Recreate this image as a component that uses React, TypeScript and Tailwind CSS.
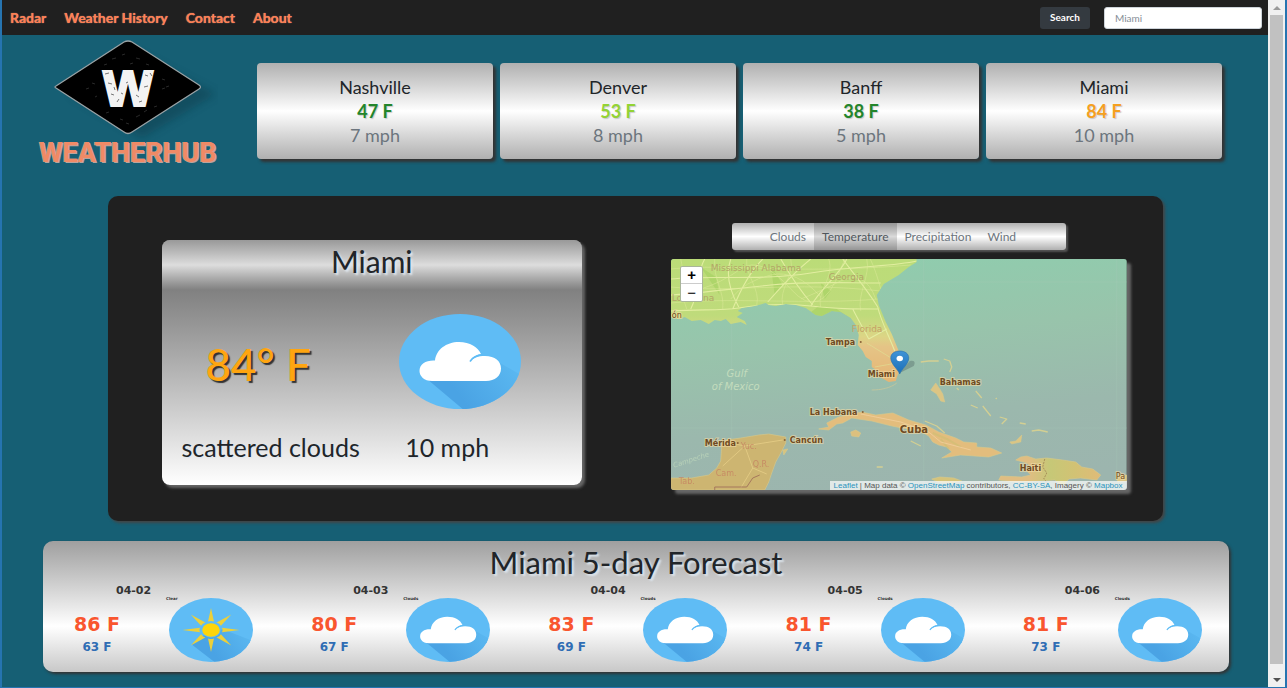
import React from "react";

type City = { name: string; temp: string; wind: string; color: string };

const cities: City[] = [
  { name: "Nashville", temp: "47 F", wind: "7 mph", color: "text-[#23852b]" },
  { name: "Denver", temp: "53 F", wind: "8 mph", color: "text-[#93d334]" },
  { name: "Banff", temp: "38 F", wind: "5 mph", color: "text-[#23852b]" },
  { name: "Miami", temp: "84 F", wind: "10 mph", color: "text-[#f5a01f]" },
];

type Day = { date: string; high: string; low: string; sky: "Clear" | "Clouds" };

const days: Day[] = [
  { date: "04-02", high: "86 F", low: "63 F", sky: "Clear" },
  { date: "04-03", high: "80 F", low: "67 F", sky: "Clouds" },
  { date: "04-04", high: "83 F", low: "69 F", sky: "Clouds" },
  { date: "04-05", high: "81 F", low: "74 F", sky: "Clouds" },
  { date: "04-06", high: "81 F", low: "73 F", sky: "Clouds" },
];

const links = ["Radar", "Weather History", "Contact", "About"];
const layers = ["Clouds", "Temperature", "Precipitation", "Wind"];

function SkyIcon({ sky, id, className }: { sky: string; id: string; className: string }) {
  return (
    <svg viewBox="0 0 122 95" preserveAspectRatio="none" className={className} aria-hidden="true">
      <defs>
        <clipPath id={`${id}-clip`}>
          <ellipse cx="61" cy="47.5" rx="61" ry="47.5" />
        </clipPath>
        <linearGradient id={`${id}-shade`} x1="0" x2="1" y1="0.4" y2="0">
          <stop offset="0.2" stopColor="#4aa3e4" />
          <stop offset="1" stopColor="#5cbaf2" />
        </linearGradient>
      </defs>
      <g clipPath={`url(#${id}-clip)`}>
        <rect width="122" height="95" fill="#5fbcf5" />
        {sky === "Clear" ? (
          <>
            <path d="M33 69 L61 47 L80 47 L122 64 V95 H66 Z" fill={`url(#${id}-shade)`} />
            <g transform="translate(61 47.5) scale(1.28 1)">
              {[0, 45, 90, 135, 180, 225, 270, 315].map((a) => (
                <path key={a} d="M-3.4 -12.5 Q0 -14 3.4 -12.5 L0 -32.5 Z" fill="#ecd03a" transform={`rotate(${a})`} />
              ))}
              <circle r="11" fill="#5fbcf5" />
              <circle r="10" fill="#fdd50a" />
            </g>
          </>
        ) : (
          <>
            <path d="M28 65 L66 97 L122 95 V61 L101 49 Z" fill={`url(#${id}-shade)`} />
            <path
              d="M33 67 C25 67 20.500 62 20.500 57 C20.500 50 27 46 36 46.500 C37 36 47 28 60 28 C71 28 79 33 82 40 C76 41 72.500 44 70.500 47.500 C74 44 79 42 86 42 C96 42 102 47 102 54.500 C102 62 96 67 87 67 Z"
              fill="#fff"
            />
            <path d="M71 47.500 C74 43 78 41 84 40.800" fill="none" stroke="#5fbcf5" strokeWidth="1.600" />
          </>
        )}
      </g>
    </svg>
  );
}

function Logo() {
  return (
    <a href="#home" className="flex w-[180px] shrink-0 flex-col items-center">
      <svg viewBox="0 0 180 104" className="h-[104px] w-[180px]">
        <defs>
          <filter id="logo-soft" x="-20%" y="-20%" width="150%" height="150%">
            <feGaussianBlur stdDeviation="4" />
          </filter>
        </defs>
        <path d="M32 57 L98 15 L178 57 L104 101 Z" fill="#0b3442" opacity=".4" filter="url(#logo-soft)" />
        <path
          d="M18 51 Q16 50 18 49 L86 5 Q90 3 94 5 L161 48 Q164 50 161 52 L94 95 Q90 98 86 95 Z"
          fill="#000"
          stroke="#9aa3a6"
          strokeWidth="1.300"
        />
        <path
          d="M66 28l3-1M74 22l4-1M84 18l3-1M98 21l4 1M108 27l3 1M54 46l3 1M57 60l2-1M68 76l3-1M82 82l3 1M98 80l4-2M116 70l3-1M124 52l3-1M124 42l3 1M92 27l3-1M88 86l3 1M106 75l3-2M48 52l3-1M128 50l3-1"
          stroke="#333"
          strokeWidth=".800"
        />
        <text
          x="90"
          y="69"
          textAnchor="middle"
          fill="#f3f3f3"
          stroke="#f3f3f3"
          strokeWidth="2"
          className="font-['DejaVu_Sans'] text-[48px] font-bold"
        >
          W
        </text>
        <path
          d="M67 37l4-1M70 46l4 1M73 57l3 1M79 65l2-3M98 58l3 2M107 38l3 1M106 50l4-1M101 65l3-1M88 46l2-1M76 50l1 3M112 36l2 3M83 56l2 1"
          stroke="#666"
          strokeWidth=".900"
        />
      </svg>
      <span className="font-[Roboto] text-[27px] leading-6 font-bold text-[#f08a66] [text-shadow:1px_1px_0_#b9a49e,-1px_0_0_#c8a49c]">
        WEATHERHUB
      </span>
    </a>
  );
}

const halo = { paintOrder: "stroke", stroke: "#f3dda6", strokeWidth: 2, strokeOpacity: 0.6 } as const;

function WeatherMap() {
  return (
    <svg viewBox="0 0 456 231" preserveAspectRatio="xMidYMid slice" className="h-[231px] w-full font-['DejaVu_Sans']">
      <defs>
        <linearGradient id="sea" x1="0.3" x2="0.5" y1="0" y2="1">
          <stop offset="0" stopColor="#8fcdae" />
          <stop offset="0.350" stopColor="#98c4ab" />
          <stop offset="0.700" stopColor="#9bb8ad" />
          <stop offset="1" stopColor="#9cb5ae" />
        </linearGradient>
        <linearGradient id="usa" gradientUnits="userSpaceOnUse" x1="0" x2="0" y1="0" y2="125">
          <stop offset="0" stopColor="#bbdc78" />
          <stop offset="0.450" stopColor="#bfdb7b" />
          <stop offset="0.620" stopColor="#dcd585" />
          <stop offset="0.700" stopColor="#e5c486" />
          <stop offset="1" stopColor="#e5b473" />
        </linearGradient>
        <linearGradient id="haiti" x1="0" x2="1" y1="0" y2="0">
          <stop offset="0.300" stopColor="#e0bd82" />
          <stop offset="0.500" stopColor="#c6c877" />
          <stop offset="0.750" stopColor="#d2c274" />
          <stop offset="1" stopColor="#e0bb78" />
        </linearGradient>
        <clipPath id="usa-clip">
          <path d="M0 58 L8 60 L14 58 L21 62 L30 61 L38 65 L44 61 L50 62 L55 60 L60 65 L70 63 L76 66 L74 62 L66 58 L72 54 L67 52 L71 49 L84 47 L95 44 L98 46 L105 47 L115 45 L125 46 L135 49 L145 56 L151 57 L161 52 L170 53 L180 59 L185 66 L188 76 L187 86 L192 92 L195 98 L201 102 L201 108 L207 112 L211 119 L218 123 L225 122 L228 113 L228 92 L221 75 L215 63 L208 46 L206 36 L213 25 L228 16 L238 8 L246 3 L246 0 L0 0 Z" />
        </clipPath>
        <linearGradient id="pin" x1="0" x2="0" y1="0" y2="1">
          <stop offset="0" stopColor="#3f93d6" />
          <stop offset="1" stopColor="#1b6fb8" />
        </linearGradient>
      </defs>
      <rect width="456" height="231" fill="url(#sea)" />
      <path d="M61 60V231M253 0V231M446 0V231M0 23H456M0 169H456" stroke="#a9cdb8" strokeWidth=".600" opacity=".5" />
      <g clipPath="url(#usa-clip)">
        <rect width="260" height="130" fill="url(#usa)" />
        <path d="M138 55l10-8 18 3 14 10-20 6zM100 6l12 20-8 10M30 8l15 10 4 18M150 24l10 8-6 8" fill="#a3d160" opacity=".6" />
        <path
          d="M0 52C30 50 50 52 68 49S110 44 140 47S180 50 207 50M62 50C70 30 80 12 92 0M97 43C110 28 125 12 140 0M68 48C58 30 55 14 60 0M140 47C150 30 170 14 176 0M207 48C196 30 182 14 172 0M0 20C40 16 90 22 140 14S220 8 246 2M182 50C188 62 194 72 198 80M207 48C210 62 218 76 224 92M198 80L216 70M20 50C30 30 25 15 34 0M0 36C30 34 60 30 100 26S170 24 210 24M110 0C118 14 128 30 142 46"
          fill="none"
          stroke="#e6f0a4"
          strokeWidth="1.100"
          opacity=".9"
        />
        <path
          d="M10 0C14 14 8 30 16 50M44 0C42 20 54 32 52 50M76 0C74 16 90 30 86 46M120 0C124 16 108 30 112 46M158 0C164 18 146 32 150 48M196 0C200 16 186 36 190 52M0 10C60 4 120 16 240 6M0 28C60 34 120 22 210 32M0 44C60 38 140 46 208 40M30 30Q50 24 70 10T120 30T170 10T210 30M130 40Q146 34 170 22T205 40M60 40Q74 22 100 16T150 38M196 84L222 100M204 108L226 104"
          fill="none"
          stroke="#dfeb9c"
          strokeWidth=".700"
          opacity=".7"
        />
      </g>
      <path d="M201 131C210 131 220 129 226 124" fill="none" stroke="#c7c79a" strokeWidth=".800" />
      <g stroke="#d9c98a" strokeWidth=".600" strokeLinejoin="round">
        <path
          d="M0 219L21 219L38 216L46 209L50 202L51 186L55 181L70 179L88 176L98 175L115 178L115 184L110 194L105 203L101 214L98 223L94 231L0 231Z"
          fill="#cdb571"
        />
        <path
          d="M148 170L158 168L156 164L168 158L191 153L205 156L222 154L238 161L255 166L268 173L285 179L293 183L306 184L306 188L320 189L331 194L318 198L290 196L271 199L281 193L276 188L268 186L262 183L258 177L248 171L231 169L221 167L201 162L181 159L172 164L166 165L158 171Z"
          fill="#e3bd7d"
        />
        <path d="M180 173l5-2 5 3 -2 4 -7-1z" fill="#dcc07e" />
        <path
          d="M345 201L350 198L356 197L365 200L376 199L392 201L405 203L411 208L422 210L430 216L426 221L410 219L398 220L392 227L384 221L366 222L345 223L328 221L330 217L351 218L360 216L355 211L362 209L356 204Z"
          fill="url(#haiti)"
        />
        <path d="M261 220l8-2 14 1 8 3-12 2-12-1z" fill="#d5c37a" />
        <path d="M265 124L260 131L266 135L270 142L274 143L272 135L269 130Z" fill="#dcc584" />
        <path d="M112 191l5-1-4 6z" fill="#d7c47e" />
        <path d="M339 183l6-1 6-6-1 7-9 2zM446 217l10-1v6l-9 1z" fill="#dcc584" />
      </g>
      <path
        d="M250 103L258 102L268 102M273 100L279 102L281 108L279 113M305 132L311 139M300 146L307 149M312 147L320 157M325 140l1-1M329 158L336 160L331 165M349 164L355 165M361 172L368 171L377 173M286 129l2 2M254 162l12 5 8 7M240 182l10 5M206 208l6 0"
        fill="none"
        stroke="#d3cf92"
        strokeWidth="1.300"
        strokeLinejoin="round"
      />
      <path d="M262 174l14 6 14 8M270 180l8 10" stroke="#c9c071" strokeWidth="2" opacity=".5" fill="none" />
      <path d="M190 155l40 8 28 10 12 10 30 8" stroke="#f1cf9d" strokeWidth=".800" fill="none" />
      <path d="M60 184l14 3 38-6M74 187l-22 20M74 187l8 22 14 6M82 209l-12 20" stroke="#e3cb84" strokeWidth=".900" fill="none" />
      <path d="M44 231v-3h32l6-9 7-3" stroke="#a2705a" strokeWidth=".900" fill="none" />
      <path d="M374 200l-2 8 4 6-3 6 3 3" stroke="#9a7a4a" strokeWidth=".700" fill="none" strokeDasharray="2 1" />

      <g fill="#b3a567" className="text-[9px]">
        <text x="40" y="12">Mississippi Alabama</text>
        <text x="158" y="21">Georgia</text>
        <text x="181" y="73" fill="#c5a165">Florida</text>
        <text x="1" y="42">Louisiana</text>
      </g>
      <g fill="#c57e60" opacity=".75" className="text-[8px]">
        <text x="70" y="190">Yuc.</text>
        <text x="82" y="208">Q.R.</text>
        <text x="45" y="217">Cam.</text>
        <text x="8" y="225">Tab.</text>
      </g>
      <g fill="#c3dcbd" className="text-[10px] italic" textAnchor="middle">
        <text x="66" y="118">Gulf</text>
        <text x="65" y="131">of Mexico</text>
        <text x="21" y="203" transform="rotate(-18 21 203)" className="text-[7px]" opacity=".7">Campeche</text>
      </g>
      <g fill="#6f4a22" className="text-[8px]" {...halo}>
        <text x="1" y="59">ón</text>
        <text x="155" y="86" className="font-bold">Tampa</text>
        <text x="197" y="118" className="font-bold">Miami</text>
        <text x="139" y="156" className="font-bold">La Habana</text>
        <text x="34" y="187" className="font-bold">Mérida</text>
        <text x="119" y="184" className="font-bold">Cancún</text>
        <text x="269" y="126" className="font-bold">Bahamas</text>
        <text x="229" y="174" className="text-[10px] font-bold">Cuba</text>
        <text x="349" y="212" className="font-bold">Haïti</text>
        <text x="445" y="220">Pa</text>
      </g>
      <g fill="#8a6238">
        <circle cx="190" cy="83" r="1" />
        <circle cx="192" cy="153" r="1" />
        <circle cx="67" cy="184" r="1" />
        <circle cx="114" cy="181" r="1" />
      </g>
      <path d="M229 114L239 102Q246 101 243 107Z" fill="#26343a" opacity=".25" />
      <path d="M229 115C227 110 220 105 220 99C220 94.500 224 92 229 92C234 92 238 94.500 238 99C238 105 231 110 229 115Z" fill="url(#pin)" stroke="#2a6fa8" strokeWidth=".600" />
      <ellipse cx="229" cy="99.500" rx="3.200" ry="2.700" fill="#fff" />
    </svg>
  );
}

export default function App() {
  return (
    <div className="flex min-h-screen border-x-2 border-b border-[#2674b0] bg-[#165f74] font-[Lato,sans-serif] text-[#212529]">
      <div className="min-w-0 flex-1">
        <header className="flex h-[35px] items-center bg-[#202020] pr-1.5 pl-2">
          <nav className="flex gap-[18px] text-sm font-bold text-[#ff7f50] [text-shadow:0_0_1px_#e0a090]">
            {links.map((l) => (
              <a key={l} href={`#${l}`}>{l}</a>
            ))}
          </nav>
          <form className="ml-auto flex items-center gap-3.5" onSubmit={(e) => e.preventDefault()}>
            <button type="submit" className="h-[22px] w-[50px] rounded-[3px] bg-[#343a40] text-[10px] font-bold text-white">
              Search
            </button>
            <input
              type="text"
              aria-label="City"
              placeholder="Miami"
              className="h-[22px] w-[158px] rounded-[3px] border border-[#ced4da] bg-white px-2.5 text-[10px] text-[#495057] placeholder:text-[#868e96]"
            />
          </form>
        </header>

        <section className="flex pr-[46px] pl-9">
          <div className="pt-[2px]">
            <Logo />
          </div>
          <div className="ml-[39px] grid flex-1 grid-cols-4 gap-[7px] pt-7">
            {cities.map((c) => (
              <article
                key={c.name}
                className="h-24 rounded bg-linear-to-b from-[#b0b0b0] via-white to-[#b0b0b0] py-3 text-center text-lg leading-6 shadow-[3px_3px_3px_#333]"
              >
                <h2>{c.name}</h2>
                <p className={`font-bold [text-shadow:1px_1px_1px_#8886] ${c.color}`}>{c.temp}</p>
                <p className="text-[#6c757d]">{c.wind}</p>
              </article>
            ))}
          </div>
        </section>

        <section className="mx-auto mt-[31px] grid h-[325px] w-10/12 grid-cols-[421fr_456fr] gap-[89px] rounded-[10px] bg-[#202020] pr-9 pl-[54px] shadow-[2px_2px_3px_#444]">
          <article className="mt-11 h-[245px] rounded-lg bg-linear-to-b from-[#808080] from-20% to-white shadow-[3px_3px_3px_#666]">
            <h1 className="h-[50px] rounded-t-lg bg-linear-to-b from-[#999] via-[#ddd] to-[#808080] text-center text-[30px] leading-[42px] [text-shadow:2px_2px_2px_#dde6ee]">
              Miami
            </h1>
            <div className="mt-6 grid grid-cols-[238fr_183fr] items-center">
              <p className="pt-1 pl-11 text-[44px] leading-[56px] font-medium text-[#ffa510] [text-shadow:2px_2px_1px_#333]">84° F</p>
              <SkyIcon sky="Clouds" id="now" className="h-[95px] w-[122px]" />
            </div>
            <div className="mt-[22px] grid grid-cols-[238fr_183fr] text-[25px] leading-8 [text-shadow:1px_1px_1px_#dde6ee]">
              <p className="pl-5">scattered clouds</p>
              <p className="pl-1.5">10 mph</p>
            </div>
          </article>

          <div className="flex flex-col items-center pt-[27px]">
            <div className="flex h-[27px] w-[334px] rounded-[3px] bg-linear-to-b from-[#b0b0b0] via-white to-[#b0b0b0] pl-[30px] text-xs shadow-[2px_2px_2px_#555]">
              {layers.map((l) => (
                <button
                  key={l}
                  type="button"
                  className={l === "Temperature" ? "bg-black/15 px-2 text-[#4f565c]" : "px-2 text-[#6c757d]"}
                >
                  {l}
                </button>
              ))}
            </div>
            <div className="relative mt-[9px] w-full overflow-hidden rounded-[3px] shadow-[4px_4px_3px_#666]">
              <WeatherMap />
              <div className="absolute top-[7px] left-[9px] flex w-[23px] flex-col rounded-xs border border-[#a9b59a] bg-white font-['Liberation_Sans'] text-[15px] text-black">
                <button type="button" aria-label="Zoom in" className="h-[17px] border-b border-[#ccc] leading-4 font-bold">+</button>
                <button type="button" aria-label="Zoom out" className="h-[17px] leading-4">−</button>
              </div>
              <p className="absolute right-0 bottom-0 bg-white/70 px-1 font-['Liberation_Sans'] text-[8px] leading-[9px] whitespace-nowrap text-[#555]">
                <a href="#leaflet" className="text-[#2a93bd]">Leaflet</a> | Map data ©{" "}
                <a href="#osm" className="text-[#2a93bd]">OpenStreetMap</a> contributors,{" "}
                <a href="#license" className="text-[#2a93bd]">CC-BY-SA</a>, Imagery ©{" "}
                <a href="#mapbox" className="text-[#2a93bd]">Mapbox</a>
              </p>
            </div>
          </div>
        </section>

        <section className="mt-5 mr-[39px] ml-[41px] h-[131px] rounded-[10px] bg-linear-to-b from-[#9f9f9f] via-white via-65% to-[#c8c8c8] shadow-[2px_2px_3px_#333]">
          <h2 className="h-[43px] text-center text-[31px] leading-[42px] [text-shadow:2px_2px_2px_#dde6ee]">Miami 5-day Forecast</h2>
          <div className="grid grid-cols-5 font-['DejaVu_Sans'] font-bold">
            {days.map((d) => (
              <article key={d.date}>
                <h3 className="pl-[73px] text-[11px] leading-[14px] text-[#333]">{d.date}</h3>
                <div className="flex">
                  <div className="w-[108px] pt-3.5 text-center">
                    <p className="text-[19px] leading-6 text-[#f9562f]">{d.high}</p>
                    <p className="text-xs leading-[22px] text-[#2f6db4]">{d.low}</p>
                  </div>
                  <div className="relative ml-[18px]">
                    <span className="absolute -top-[2px] -left-[3px] text-[4px] leading-[6px] text-[#333]">{d.sky}</span>
                    <SkyIcon sky={d.sky} id={`day-${d.date}`} className="h-16 w-[84px]" />
                  </div>
                </div>
              </article>
            ))}
          </div>
        </section>
      </div>

      <div className="flex w-[17px] flex-col items-center bg-[#f0f0f0]" aria-hidden="true">
        <div className="flex h-[15px] items-center">
          <svg viewBox="0 0 8 4" className="h-1 w-2"><path d="M0 4L4 0L8 4Z" fill="#999" /></svg>
        </div>
        <div className="w-[13px] flex-1 bg-[#c1c1c1]" />
        <div className="flex h-[23px] items-center pt-2">
          <svg viewBox="0 0 8 4" className="h-1 w-2"><path d="M0 0L4 4L8 0Z" fill="#505050" /></svg>
        </div>
      </div>
    </div>
  );
}
